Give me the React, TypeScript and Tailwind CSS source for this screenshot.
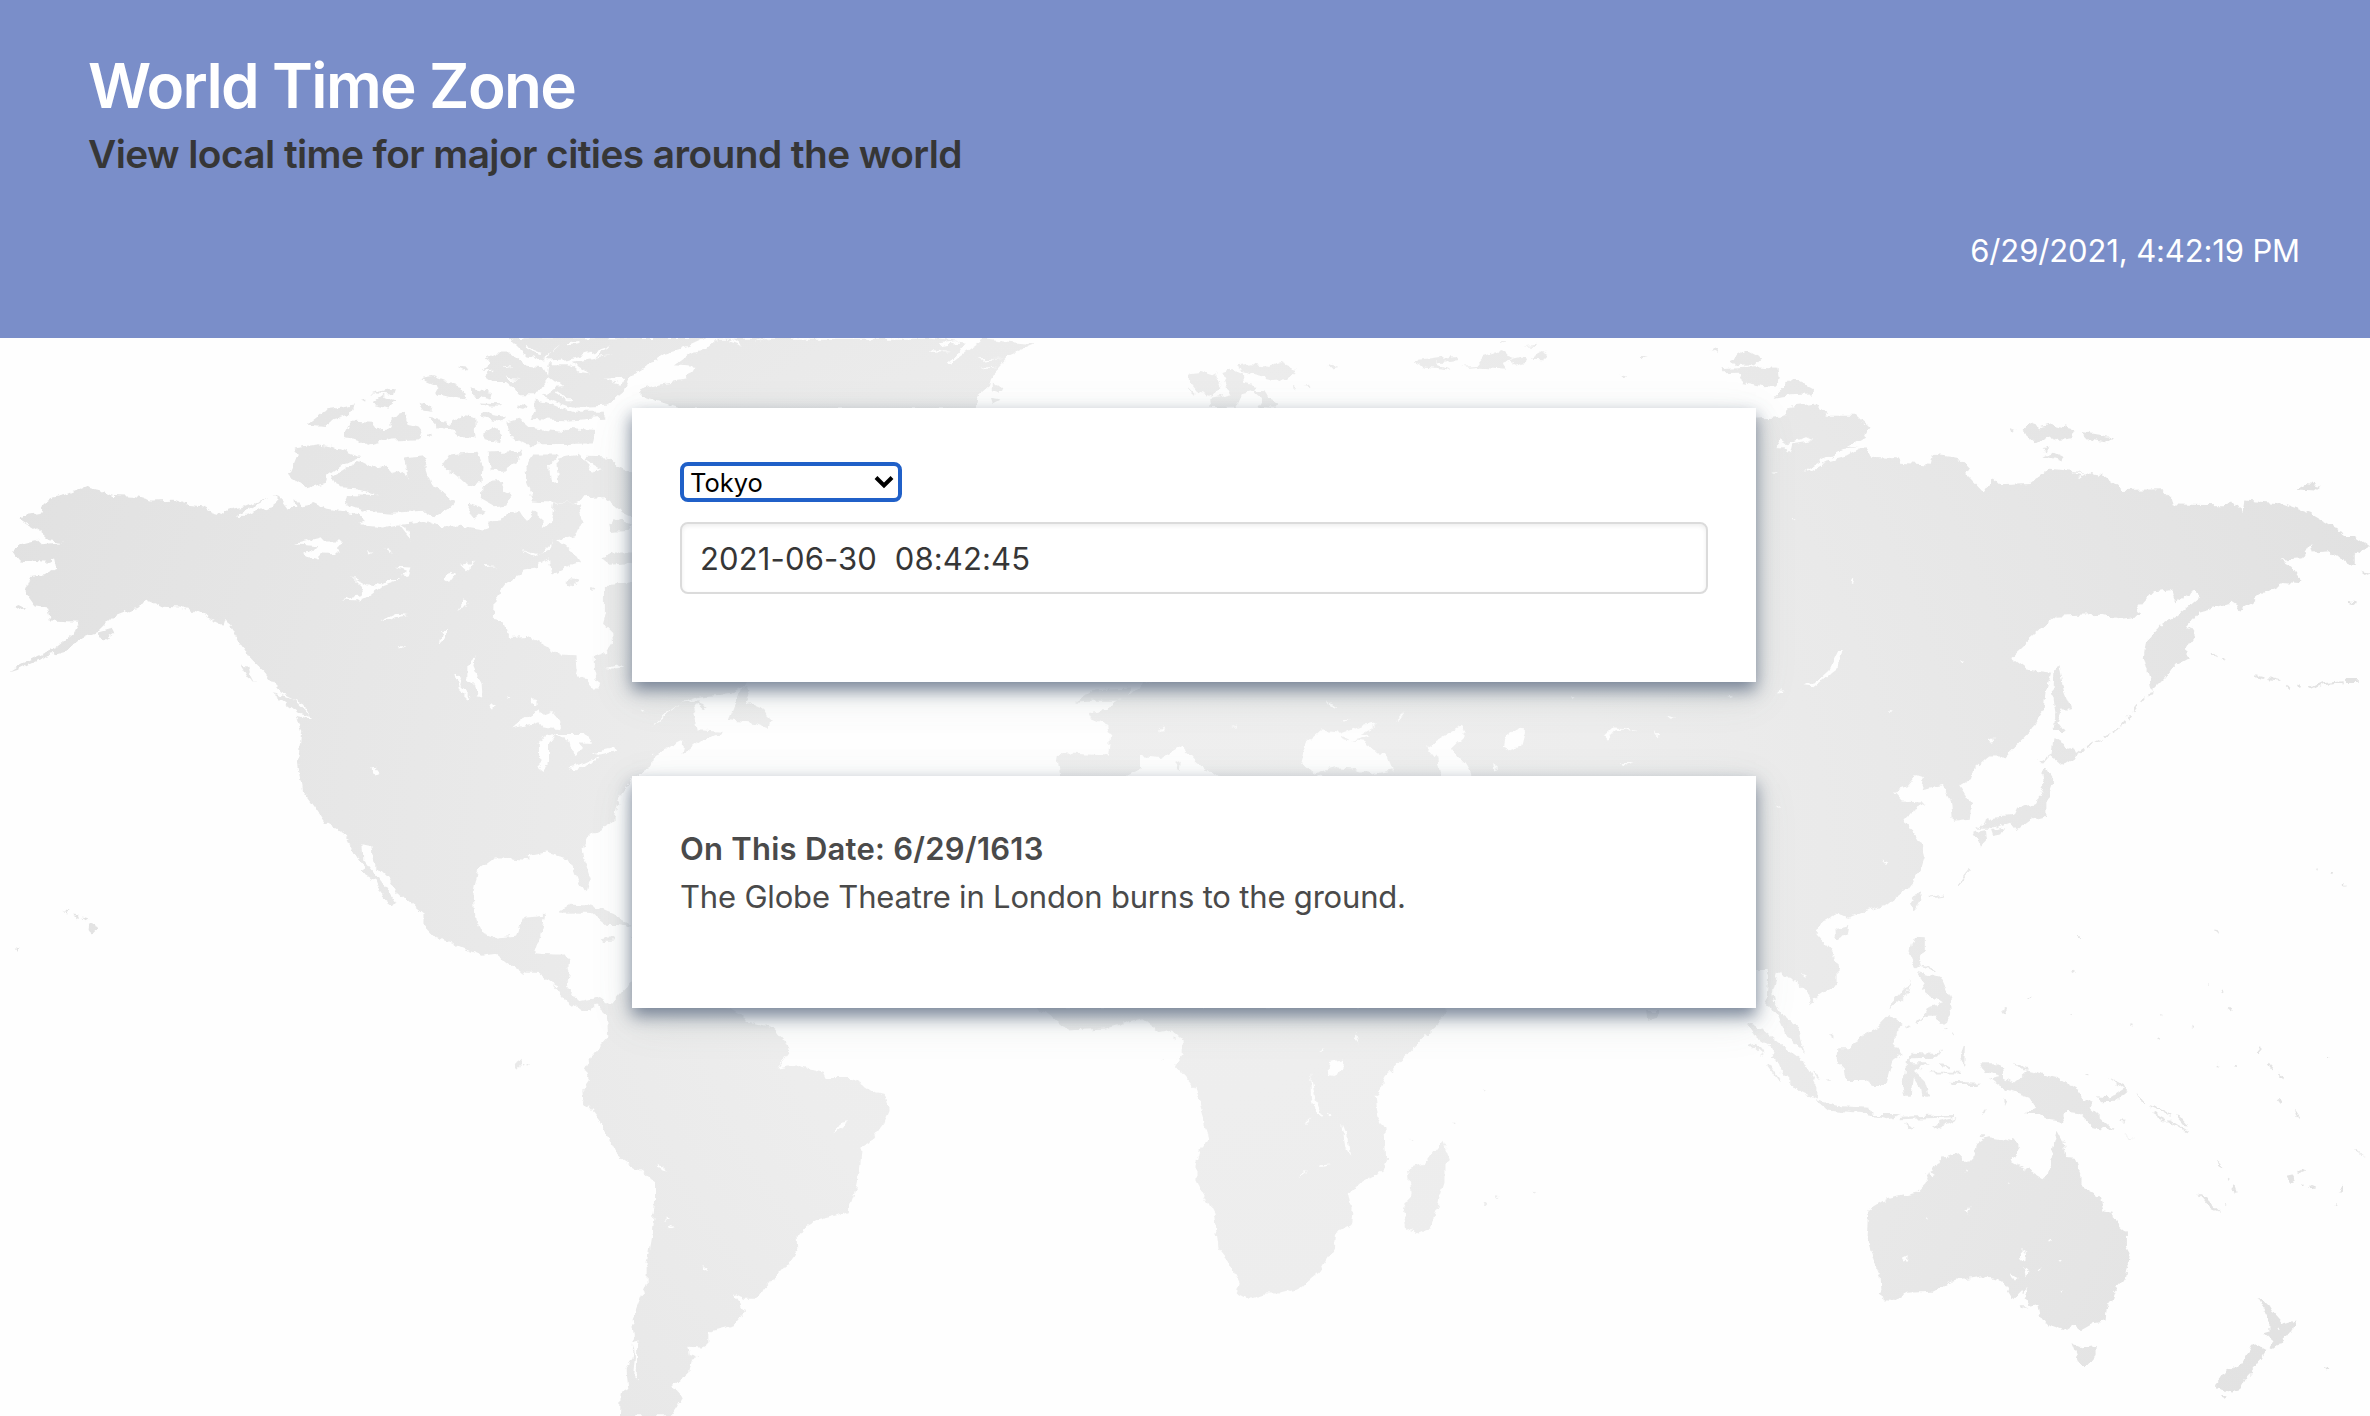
import React from "react";

const CARD =
  "w-[1124px] bg-white px-12 shadow-[0_8px_16px_0_rgba(100,114,136,0.85),0_12px_40px_0_rgba(90,115,110,0.13)]";

function Land() {
  return (
    <g fill="#fff">
      {/* North America */}
      <g transform="translate(0 330) scale(.40816)">
        <path d="M212,380 L224,388 250,394 280,404 330,406 372,418 425,416 460,428 495,432 520,444 548,452 560,440 600,432 640,415 655,413 620,432 600,444 580,456 610,455 640,440 670,432 685,420 668,404 690,412 708,436 726,436 724,414 738,430 770,424 800,438 840,444 880,452 898,472 880,478 940,484 985,474 1008,472 1040,468 1070,480 1130,482 1190,492 1200,470 1225,466 1250,450 1275,446 1290,470 1310,444 1335,465 1325,490 1350,470 1358,425 1425,424 1418,445 1426,468 1410,505 1370,515 1400,540 1420,570 1390,580 1350,600 1345,560 1310,580 1280,585 1275,600 1240,625 1212,660 1210,710 1235,715 1248,752 1290,750 1320,765 1370,795 1410,797 1412,830 1430,855 1455,882 1468,870 1455,835 1455,800 1485,790 1502,765 1500,740 1475,715 1482,690 1482,625 1568,620 1568,1090 1545,1100 1520,1110 1505,1135 1515,1160 1505,1200 1475,1220 1440,1240 1425,1270 1430,1300 1445,1345 1438,1372 1420,1360 1405,1320 1390,1295 1370,1290 1340,1280 1290,1290 1300,1300 1255,1295 1210,1295 1170,1325 1160,1380 1165,1440 1185,1480 1215,1492 1262,1484 1280,1460 1285,1440 1335,1435 1325,1480 1308,1530 1385,1530 1395,1540 1390,1575 1290,1575 1255,1560 1215,1528 1180,1533 1110,1505 1070,1490 1035,1455 1035,1430 1000,1400 975,1380 950,1340 915,1305 910,1265 888,1260 890,1295 930,1345 970,1400 962,1410 935,1390 920,1350 880,1325 895,1315 870,1290 845,1235 795,1207 770,1170 740,1130 730,1060 738,985 725,945 765,955 740,915 690,890 650,840 610,800 575,745 550,705 545,722 510,705 480,690 440,680 400,678 360,660 345,680 320,685 280,700 240,740 200,755 160,785 110,800 50,828 25,836 50,820 80,805 140,778 180,745 195,715 125,712 118,680 85,675 60,640 75,605 110,600 140,585 135,562 110,570 50,565 30,540 50,525 90,515 100,525 155,520 120,515 95,495 55,470 48,462 58,452 100,445 105,428 130,408 165,400Z" />
        <path d="M38,680L50,674 65,681 50,686ZM240,742L275,732 280,742 255,758 242,752ZM590,820L608,822 612,840 624,863 608,850ZM668,890L720,905 745,930 762,948 735,942 700,915Z" />
        <path d="M722,288L780,280 830,290 880,312 850,325 800,360 795,375 752,388 735,375 708,358 720,330 730,305Z" />
        <path d="M815,360L880,320 910,335 950,330 960,352 990,345 1000,365 990,315 1050,308 1040,335 1055,380 1115,420 1095,440 1060,458 1040,445 960,450 900,445 845,425 850,402 930,405 875,390 830,388Z" />
        <path d="M752,232L800,195 870,185 860,205 820,218 800,235ZM840,262L860,222 910,225 925,245 960,240 958,215 990,205 1000,230 1035,238 1028,265 960,268 900,282 880,268ZM908,155L970,142 965,158ZM912,180L935,162 970,175 950,190ZM882,170L900,168 900,175ZM1030,120L1060,115 1130,140 1142,170 1110,165 1075,158 1065,135ZM1150,140L1205,152 1200,170 1160,160ZM1120,92L1145,95 1140,103ZM1028,176L1050,185 1060,198 1035,195Z" />
        <path d="M1050,215L1090,222 1100,235 1130,210 1162,215 1165,265 1130,262 1110,245 1070,238ZM1185,255L1210,240 1230,258 1225,275 1190,270ZM1175,180L1230,182 1225,188 1185,187ZM1180,202L1235,210 1225,222 1175,212ZM1265,180L1290,184 1285,196 1268,192ZM1045,256L1062,256 1055,264Z" />
        <path d="M1080,335L1100,305 1170,298 1182,330 1180,372 1145,380 1110,350ZM1195,300L1280,296 1265,325 1235,345 1200,345ZM1200,372L1230,370 1235,395 1255,405 1240,428 1210,432 1180,415 1182,385ZM1150,425L1190,440 1165,462 1145,450Z" />
        <path d="M1240,225L1270,215 1300,240 1380,250 1400,240 1455,245 1450,278 1330,280 1290,280 1250,260ZM1310,170L1350,180 1400,200 1480,200 1478,215 1400,222 1300,218 1310,195Z" />
        <path d="M1285,340L1310,305 1370,305 1345,330 1350,375 1370,372 1365,315 1420,305 1440,325 1450,350 1480,340 1510,360 1430,315 1440,308 1490,310 1510,330 1568,360 1568,470 1530,450 1480,410 1430,412 1400,425 1300,420 1300,400 1290,380Z" />
        <path d="M1495,475L1520,465 1545,475 1540,492 1500,495ZM1478,555L1500,545 1560,545 1560,570 1490,575ZM1385,620L1400,608 1418,612 1395,628ZM1445,625L1457,630 1450,642Z" />
        <path d="M1370,1425L1400,1408 1450,1410 1500,1430 1545,1455 1540,1462 1480,1452 1450,1428ZM1475,1490L1500,1488 1505,1495 1480,1497Z" />
        <path d="M218,1456L240,1466 225,1481 217,1470ZM182,1432L194,1436 188,1441ZM201,1442L219,1446 212,1451ZM156,1422L168,1424 162,1430ZM36,1513L48,1515 42,1521Z" />
        <path d="M1290,18L1568,18 1568,95 1530,105 1500,125 1530,130 1510,160 1470,190 1400,190 1330,165 1370,135 1345,115 1310,160 1270,160 1260,145 1240,130 1215,130 1190,110 1205,95 1180,98 1200,80 1185,70 1215,55 1250,55 1290,85 1335,90 1345,75 1290,65 1255,30Z" />
      </g>
      {/* Greenland and Ellesmere */}
      <g transform="translate(480 336) scale(.3827 .3333)">
        <path d="M75,6L590,6 545,30 480,55 430,95 390,125 375,165 340,200 320,216 260,216 230,180 200,170 225,140 180,110 250,80 320,70 220,65 150,75 130,50Z" />
        <path d="M590,40L620,8 1180,8 1270,20 1240,70 1310,10 1450,25 1380,60 1340,110 1330,150 1300,180 1295,220 530,220 420,180 415,160 460,145 540,130 560,90 510,85 550,50Z" />
        <path d="M1340,140L1362,150 1358,170 1340,165ZM1335,185L1360,190 1340,202Z" />
      </g>
      {/* Svalbard and the Arctic islands */}
      <g transform="translate(1150 336) scale(.40816 .3333)">
        <path d="M97,112L125,108 150,118 165,108 180,160 160,165 150,182 115,165 98,140ZM175,108L200,98 225,112 228,140 265,150 255,165 225,175 210,215 148,216 145,190 200,175 190,150ZM216,88L250,82 285,90 320,78 360,102 335,130 300,132 225,108ZM252,165L280,165 290,185 315,200 305,215 262,212 275,190ZM94,152L115,178 100,168ZM430,96L445,86 464,92 450,97ZM645,76L690,70 745,60 752,72 700,80 745,102 700,95 670,92ZM765,92L800,90 820,60 860,45 870,58 890,66 860,80 870,98 810,92 780,95ZM880,72L915,64 920,78 895,86ZM930,68L960,48 975,58 965,70ZM1198,60L1222,60 1205,67ZM1150,116L1174,122 1162,127ZM1376,40L1397,43 1390,50ZM855,18L878,19 865,25ZM915,28L945,24 948,30ZM350,152L358,158 352,162ZM375,150L395,146 395,153Z" />
        <path d="M1420,70L1460,42 1498,66 1480,88 1435,90ZM1395,100L1480,94 1535,98 1538,125 1535,152 1500,150 1450,138 1445,110 1400,112ZM1528,188L1568,130 1568,180Z" />
      </g>
      {/* Eastern Canada, Central and South America */}
      <g transform="translate(500 680) scale(.3333 .46948)">
        <path d="M330,-20L760,-20 735,10 690,30 600,35 540,50 490,75 455,100 540,50 600,45 580,70 590,105 665,108 660,118 600,130 545,158 550,130 490,150 460,160 455,185 400,205 330,280Z" />
        <path d="M725,15L755,20 740,45 790,60 812,90 805,102 770,92 685,85 700,60ZM580,46L620,56 610,60Z" />
        <path d="M0,548L45,545 65,510 135,502 125,540 105,582 200,588 208,620 198,650 235,685 300,675 330,690 375,655 400,640 600,690 690,700 750,728 820,740 850,765 868,795 835,828 890,820 970,835 980,850 1060,850 1120,878 1158,885 1166,915 1150,945 1110,985 1085,995 1080,1045 1070,1080 1045,1130 1010,1140 955,1150 910,1168 893,1185 895,1215 860,1250 800,1290 770,1318 730,1318 700,1308 735,1345 700,1375 625,1388 625,1412 600,1422 565,1420 570,1440 595,1445 575,1450 568,1475 520,1505 550,1528 515,1568 360,1568 362,1520 385,1510 380,1470 395,1440 405,1400 398,1360 440,1285 440,1240 455,1180 465,1110 465,1070 430,1048 375,1025 345,1005 300,940 250,895 247,875 270,852 255,830 275,800 325,760 320,710 290,690 270,705 245,705 195,680 155,645 120,625 50,612Z" />
        <path d="M175,496L220,480 290,488 340,505 390,522 320,522 280,495ZM305,550L320,548 345,554 315,555ZM385,545L396,545 396,552ZM45,812L60,805 62,825 50,825ZM66,820L74,818 72,824ZM80,819L90,820 84,824Z" />
      </g>
      {/* Europe and Africa */}
      <g transform="translate(1000 660) scale(.49117 .40816)">
        <path d="M1540,40L300,50 265,85 225,110 215,125 180,130 185,142 220,160 225,180 220,234 120,228 118,245 124,300 245,290 285,265 285,235 330,240 370,210 400,250 450,295 500,300 500,265 420,190 415,190 405,215 470,270 520,300 570,300 640,285 800,295 900,300 890,240 870,210 940,160 950,180 920,215 950,260 970,300 1000,300 1568,300Z" />
        <path d="M155,102L190,75 265,70 262,100 180,100Z" />
        <path d="M75,850L910,850 895,890 850,940 785,1020 765,1070 770,1120 785,1150 788,1220 780,1250 735,1280 710,1308 718,1345 715,1385 682,1405 680,1440 650,1500 610,1540 570,1552 540,1552 505,1565 482,1550 488,1525 465,1470 445,1440 435,1355 400,1275 400,1240 410,1195 426,1175 415,1120 400,1055 358,995 372,965 372,930 350,905 325,912 290,878 215,903 140,908 110,880Z" />
        <path d="M903,1178L918,1225 905,1240 905,1280 890,1340 875,1392 850,1405 830,1395 822,1345 838,1305 830,1245 870,1230ZM356,920L360,925 355,930ZM982,1324L990,1328 986,1334ZM1010,1311L1017,1314 1012,1319ZM1088,1303L1094,1304 1090,1307ZM327,975L332,976 329,980ZM985,1050L989,1051 986,1055ZM923,1133L929,1134 925,1138ZM834,1178L838,1180 835,1183ZM360,245L368,250 366,272 358,265ZM1315,860L1340,860 1335,880 1318,884Z" />
      </g>
      {/* Asia */}
      <g transform="translate(1740 330) scale(.4018 .40816)">
        <path d="M-20,220L80,215 115,210 160,180 215,210 290,210 322,238 310,262 270,285 310,290 320,310 395,315 400,325 475,330 480,305 550,315 575,340 560,350 605,397 630,365 645,378 720,375 770,340 870,350 900,355 950,392 1050,390 1075,415 1080,430 1200,432 1230,420 1250,452 1255,418 1350,425 1420,450 1490,490 1500,505 1530,505 1568,530 1530,550 1530,575 1490,560 1470,542 1425,545 1420,525 1400,560 1345,562 1375,580 1398,615 1390,622 1350,620 1300,645 1270,670 1245,685 1220,668 1180,680 1140,690 1115,720 1132,745 1110,780 1112,805 1075,825 1055,855 1025,885 1018,850 1005,800 1010,765 1040,730 1090,700 1145,655 1130,640 1085,665 1075,635 1030,640 985,690 1000,700 950,708 900,695 790,700 725,755 675,802 715,832 775,840 760,890 755,935 725,980 660,1045 620,1045 580,1080 575,1100 547,1117 575,1160 572,1200 530,1205 525,1150 505,1115 450,1125 455,1095 440,1090 415,1120 382,1132 405,1155 465,1158 430,1175 410,1200 450,1260 458,1290 445,1330 415,1370 365,1408 320,1420 270,1440 235,1432 205,1450 188,1478 225,1520 245,1568 -20,1568Z" />
        <path d="M110,210L130,185 185,178 215,205ZM85,168L105,140 135,118 185,145 180,158 120,160ZM698,245L720,228 750,238 775,230 835,245 825,265 790,270 765,262 735,278ZM852,250L900,258 928,263 915,275 870,268ZM750,292L765,290 762,300ZM755,310L780,300 805,312 800,322ZM1383,390L1410,375 1447,382 1430,393ZM676,240L688,245 680,254ZM1540,590L1568,594 1555,600Z" />
        <path d="M792,815L805,880 825,930 800,930 790,960 808,985 780,985 785,940 778,880 780,835ZM780,1000L830,1030 845,1038 800,1068 770,1045 752,1065 745,1058 775,1040ZM760,1075L782,1110 765,1160 765,1190 725,1200 690,1225 675,1205 625,1222 590,1222 630,1195 680,1190 690,1170 735,1160 755,1120 750,1085ZM580,1232L612,1225 615,1250 598,1268 590,1250ZM625,1225L660,1218 650,1236 630,1240ZM450,1372L448,1400 435,1425 423,1405ZM235,1470L272,1460 268,1480 245,1492 236,1485Z" />
        <path d="M1024,886L1015,898 1000,906 985,925 970,945 952,970 930,985 900,1000 870,1015 835,1040" fill="none" stroke="#fff" strokeWidth="5" strokeDasharray="16 9" />
        <path d="M1282,846L1300,850M1315,855L1345,860M1360,868L1370,878M1385,870L1395,875M1415,872L1425,880 1450,868 1500,863M1508,860L1535,860M1175,792L1185,802M1200,805L1210,810M1518,666L1532,670M545,1358L575,1322M470,1388L510,1383M1430,1318L1435,1320M1470,1326L1475,1329M1503,1358L1507,1359M1184,1472L1191,1474" fill="none" stroke="#fff" strokeWidth="5" />
      </g>
      {/* South-east Asia and Oceania */}
      <g transform="translate(1740 900) scale(.4018 .3333)">
        <path d="M-20,-10L390,-10 330,25 265,50 235,43 205,65 187,100 225,150 243,190 243,250 200,285 175,310 175,285 130,235 105,228 103,215 92,220 80,270 85,310 100,340 145,380 150,420 162,455 120,420 90,340 65,320 70,230 45,140 30,60Z" />
        <path d="M15,370L55,385 95,425 150,475 165,500 190,550 190,600 150,575 105,520 75,440 35,405ZM20,425L45,440 60,465M70,495L85,520 100,545" />
        <path d="M188,600L245,615 320,620 330,645 400,645 370,658 300,642 220,632ZM400,650L530,645 530,652 400,658ZM480,685L495,665 545,650 520,668 490,685ZM405,668L435,680 420,685ZM600,640L612,625 605,645Z" />
        <path d="M242,445L275,445 280,425 340,385 372,345 405,375 385,395 385,430 402,460 380,480 362,555 335,555 310,540 262,540 258,505 240,485ZM372,328L375,315 415,265 425,240 418,280 380,320Z" />
        <path d="M415,480L430,458 490,462 505,450 490,473 425,475 425,490 470,490 435,515 460,545 470,585 455,590 450,560 430,530 425,590 412,590 405,545 415,520ZM520,545L600,548 590,555 530,555ZM548,470L560,430 558,500ZM655,592L663,600 657,615Z" />
        <path d="M430,110L460,112 460,150 445,175 450,200 480,205 490,215 435,200 420,160ZM440,215L500,235 525,300 528,340 510,368 485,350 455,350 465,325 505,310 480,290 450,265 460,245Z" />
        <path d="M598,490L640,490 655,505 658,535 680,550 715,512 790,535 840,570 845,590 878,608 870,625 930,690 880,682 845,640 815,635 800,665 770,660 745,645 712,645 735,625 715,590 655,565 620,535 650,527 610,515ZM885,592L920,595 955,568 965,572 935,602 900,604ZM915,530L955,555 962,572ZM988,582L1008,612 1000,612ZM955,705L985,712 970,710Z" />
        <path d="M790,695L805,730 812,768 830,770 850,830 850,860 895,890 905,930 925,935 925,955 963,995 963,1040 972,1060 960,1135 930,1180 912,1235 910,1265 880,1270 850,1290 830,1270 805,1290 760,1270 745,1245 740,1210 720,1215 700,1170 680,1195 655,1145 605,1128 525,1145 480,1175 415,1178 385,1200 360,1198 340,1182 352,1170 350,1130 338,1095 325,1040 315,1010 320,930 360,900 440,875 465,845 460,825 485,808 505,770 540,760 555,780 580,778 590,735 620,712 690,725 695,745 675,780 755,838 770,820 780,740ZM695,1222L718,1222 705,1228Z" />
        <path d="M825,1330L850,1342 885,1335 885,1365 865,1395 845,1395ZM1288,1190L1315,1215 1330,1245 1350,1272 1380,1262 1370,1295 1330,1353 1318,1345 1325,1320 1305,1300 1320,1295 1320,1265 1310,1240ZM1280,1330L1310,1350 1285,1400 1260,1435 1245,1470 1225,1478 1185,1465 1185,1452 1210,1415 1245,1395 1270,1355ZM1200,1485L1212,1485 1203,1492ZM1143,886L1160,895 1196,936 1168,922ZM1360,833L1377,829 1383,842 1368,849ZM1185,775L1210,810 1195,798ZM1525,750L1558,768 1535,760ZM1457,1401L1467,1405 1462,1412ZM590,706L610,706 605,717Z" />
        <path d="M1020,615L1040,625 1075,648M1030,640L1060,660M1088,645L1110,675M1065,660L1115,695M25,428L55,462M70,495L100,545M470,518L550,518M1340,595L1350,610M1378,628L1392,655M1290,440L1292,465M1315,490L1328,510M1340,520L1352,535M1385,820L1405,810M1490,880L1502,855M1484,908L1488,912M1215,835L1222,840M1228,860L1234,878M1205,915L1210,915M1195,270L1200,275M1215,325L1225,335M1044,345L1051,347M1184,94L1191,95M826,217L832,211M843,108L844,120M655,345L660,325M1465,470L1467,475M1189,493L1195,494M1231,500L1237,502M969,375L977,377M1037,418L1042,420M1124,376L1130,378M820,338L825,340M714,295L721,288M1395,850L1402,856M1420,860L1430,865M860,522L870,523M455,350L440,365M412,385L422,378M945,660L960,662M1165,252L1170,255M530,395L533,405M510,388L512,393M227,402L228,410M220,540L226,540M182,515L195,538M150,480L168,500M500,495L520,500M680,495L715,510" fill="none" stroke="#fff" strokeWidth="5" />
      </g>
    </g>
  );
}

function Water() {
  return (
    <g fill="#000">
      <g transform="translate(0 330) scale(.40816)">
        <path d="M720,525L790,508 800,518 838,518 825,535 830,548 795,545 780,560 745,550 780,530ZM835,660L880,650 890,635 860,605 900,628 920,630 950,610 980,610 940,625 900,655 870,662ZM930,715L970,695 1000,698 970,704 945,715ZM1080,765L1085,740 1072,735 1095,735 1090,755ZM975,775L995,775 985,782ZM913,1078L920,1075 930,1088 920,1092ZM1115,840L1130,850 1125,870 1155,900 1150,905 1125,880ZM1145,825L1165,797 1160,825 1180,870 1182,898 1170,895 1160,868 1145,855ZM1090,612L1105,592 1115,600 1100,620ZM1125,575L1165,570 1140,590ZM1120,690L1135,660 1145,662ZM1200,925L1208,912 1220,922 1205,930ZM1238,897L1255,900 1240,903ZM1303,912a7,7 0 1,0 14,0a7,7 0 1,0 -14,0ZM903,545L905,550 915,545ZM940,530L965,548 950,545ZM1188,573L1215,576 1190,579ZM705,497L722,508ZM970,580L1008,582 1000,605 985,600 998,590Z" />
        <path d="M1252,976L1290,948 1320,930 1335,940 1350,935 1370,960 1372,978 1330,974 1305,965 1280,970ZM1320,1015L1335,995 1360,990 1345,1010 1345,1050 1332,1078 1322,1070ZM1360,990L1430,990 1448,1012 1418,1010 1428,1025 1412,1040 1400,1030 1395,1010ZM1395,1072L1430,1060 1465,1045 1450,1062 1410,1078ZM1450,1035L1500,1022 1508,1032 1470,1040Z" />
        <path d="M1485,828L1510,822 1530,830 1500,832ZM975,474L1000,490 1008,516 995,500ZM1280,536L1320,550 1340,530 1355,515 1345,535 1310,555Z" />
      </g>
      <g transform="translate(480 336) scale(.3827 .3333)">
        <path d="M150,88L160,75 230,70 290,50 340,30 300,60 345,55 240,80 285,115 265,112 235,85 180,85 175,115 165,95ZM165,70L210,22 185,45 175,72ZM320,125L380,122 370,140ZM140,185L160,150 205,135 220,150 180,155 165,175ZM60,90L90,92 65,96ZM70,125L110,130 75,132ZM660,8L690,32 650,15ZM720,20L760,8 730,14ZM1180,40L1230,45 1170,48ZM1300,70L1370,68 1310,74ZM1310,95L1350,92 1320,100Z" />
        <path d="M1200,28L1250,20M1225,85L1250,60 1300,20M1260,45L1285,25M200,170L225,190 240,190M260,215L330,212M120,30L160,48M230,22L260,18" fill="none" stroke="#000" strokeWidth="6" />
      </g>
      <g transform="translate(1150 336) scale(.40816 .3333)">
        <path d="M158,108L172,150 185,165 176,150 175,112Z" />
      </g>
      <g transform="translate(500 680) scale(.3333 .46948)">
        <path d="M470,1028L497,1042 490,1046 472,1036ZM603,1250L625,1248 622,1258ZM1000,968L1020,945 1048,942 1022,955ZM500,1145L510,1150 500,1152ZM510,1162L522,1165 512,1170ZM148,642L178,650 172,655ZM848,1250L855,1255 800,1290ZM400,1410L412,1408 410,1490 400,1480 405,1440ZM862,800L828,828 850,805ZM425,67L436,69 430,72Z" />
      </g>
      <g transform="translate(1000 660) scale(.49117 .40816)">
        <path d="M612,250L622,205 655,170 690,175 700,195 740,200 790,240 800,270 760,280 720,268 680,265 640,278ZM690,182L740,160 770,155 735,180 755,185 715,198ZM1025,190L1050,170 1068,172 1060,210 1040,222 1022,210ZM1230,185L1245,168 1300,170 1250,175 1237,195ZM1265,250L1290,250 1275,256ZM665,98L688,118 675,115ZM806,148L825,128 815,145ZM1357,136L1375,142 1365,144ZM325,175L335,162 332,172ZM470,167L485,160 480,165ZM1006,255L1016,264 1008,268ZM1480,90L1490,92 1486,99ZM1334,172L1342,180 1338,184ZM1165,88L1172,92 1166,96ZM695,150L715,149 700,153Z" />
        <path d="M672,985L697,978 695,1000 685,1022 668,1018ZM632,1015L645,1085 658,1118 645,1110 633,1070ZM697,1135L707,1165 713,1218 703,1195ZM665,1102L683,1118 672,1115ZM725,908L733,940 724,925ZM650,962L663,947 655,962ZM608,1270L628,1252 615,1260ZM652,1238L676,1236 655,1242ZM620,1133L632,1120 625,1133Z" />
      </g>
      <g transform="translate(1740 330) scale(.4018 .40816)">
        <path d="M155,873L185,866 220,835 245,785 256,783 245,825 210,855 185,875ZM158,347L200,322 255,292 310,285 265,310 215,322 180,342ZM88,290L100,270 115,280 165,265 180,272 130,280 125,300 110,290ZM95,893L104,876 102,892ZM273,618L277,610 282,612 278,622ZM373,935L383,926 378,935ZM619,1005L628,1000 630,1012 622,1014ZM90,1160L105,1170 95,1170ZM545,812L558,812 550,818ZM75,350L98,348 85,352ZM355,1297L367,1302 360,1306ZM129,463L136,464 131,467ZM420,1265L430,1272ZM395,1228L401,1228ZM820,350L865,350 840,368 850,355Z" />
      </g>
      <g transform="translate(1740 900) scale(.4018 .3333)">
        <path d="M558,938L573,925 568,940ZM698,1050L712,1060 710,1082 700,1072ZM705,1100L718,1115 712,1130ZM675,1120L688,1130 685,1142ZM742,1115L750,1102 750,1112ZM406,1080L420,1072 418,1088ZM463,952L471,957 465,962ZM712,1160L716,1185 700,1205 705,1180ZM769,1012L777,1017 771,1022ZM798,1166L804,1170 800,1175ZM666,847L673,851 668,855ZM475,830L470,812 485,825ZM152,218L162,225 156,230ZM790,1085L798,1080 795,1088ZM1335,1286L1342,1290 1337,1293ZM560,810L566,806 563,816ZM65,428L78,430 70,435Z" />
      </g>
    </g>
  );
}

function WorldMap() {
  return (
    <svg className="absolute inset-0 h-full w-full" viewBox="0 0 2370 1416" aria-hidden="true">
      <defs>
        <radialGradient id="shade" gradientUnits="userSpaceOnUse" cx="1185" cy="880" r="1250">
          <stop offset="0" stopColor="#efefef" />
          <stop offset="0.35" stopColor="#ededed" />
          <stop offset="1" stopColor="#e1e1e1" />
        </radialGradient>
        <filter id="coast" filterUnits="userSpaceOnUse" x="0" y="330" width="2370" height="1086">
          <feTurbulence type="fractalNoise" baseFrequency="0.11" numOctaves="3" seed="4" result="n" />
          <feDisplacementMap in="SourceGraphic" in2="n" scale="8" xChannelSelector="R" yChannelSelector="G" />
        </filter>
        <mask id="land" maskUnits="userSpaceOnUse" x="0" y="330" width="2370" height="1086">
          <g filter="url(#coast)">
            <Land />
            <Water />
          </g>
        </mask>
      </defs>
      <rect x="0" y="330" width="2370" height="1086" fill="url(#shade)" mask="url(#land)" />
    </svg>
  );
}

export default function App() {
  return (
    <div className="relative h-[1416px] w-[2370px] overflow-hidden bg-[#fefefe] font-['Inter',sans-serif]">
      <WorldMap />
      <header className="relative flex h-[338px] flex-col bg-[#7a8ec9] px-[88px]">
        <h1 className="mt-12 text-[62px] leading-[76px] font-semibold tracking-[-1.65px] text-white">
          World Time Zone
        </h1>
        <h2 className="mt-1 text-[38.8px] leading-[52px] font-semibold tracking-[-0.56px] text-[#363636]">
          View local time for major cities around the world
        </h2>
        <p className="mt-[47px] -mr-[18px] text-right text-[31px] leading-12 tracking-[-0.13px] text-white">
          6/29/2021, 4:42:19 PM
        </p>
      </header>
      <main className="relative ml-[632px] flex flex-col gap-[94px] pt-[70px]">
        <section className={CARD + " h-[274px] pt-[54px]"}>
          <div className="flex h-10 w-[222px] items-center justify-between rounded-lg border-4 border-[#2060c8] bg-white pr-1 pl-1.5">
            <span className="pt-0.5 text-[25.5px] leading-8 text-black">Tokyo</span>
            <svg className="h-3.5 w-5" viewBox="0 0 20 14" fill="none" stroke="#000" strokeWidth="4">
              <path d="M2 2.5L10 10.5L18 2.5" />
            </svg>
          </div>
          <div className="mt-5 flex h-[72px] items-center rounded-lg border-2 border-[#dbdbdb] bg-white px-[18px] pt-0.5 text-[31px] tracking-[0.14px] text-[#363636] shadow-[inset_0_2px_4px_rgba(10,10,10,0.07)]">
            <span className="whitespace-pre">{"2021-06-30  08:42:45"}</span>
          </div>
        </section>
        <section className={CARD + " h-[232px] pt-[49px] text-[31px] leading-12 text-[#4a4a4a]"}>
          <p className="font-semibold tracking-[0.24px]">On This Date: 6/29/1613</p>
          <p className="tracking-[-0.18px]">The Globe Theatre in London burns to the ground.</p>
        </section>
      </main>
    </div>
  );
}
